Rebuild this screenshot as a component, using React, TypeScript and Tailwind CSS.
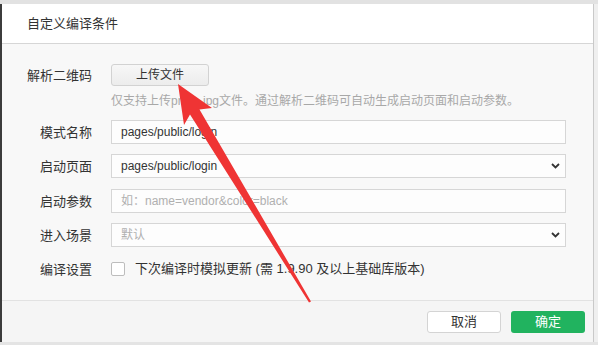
import React from 'react';

// Custom compile-condition dialog (WeChat devtools style) with a red annotation arrow

const font = { fontFamily: '"Liberation Sans", "Noto Sans CJK SC", sans-serif' };

function Chevron() {
  return (
    <svg width="9" height="6" viewBox="0 0 9 6" className="shrink-0">
      <polyline points="1,1 4.5,4.5 8,1" fill="none" stroke="#333" strokeWidth="1.8" />
    </svg>
  );
}

function Row({ label, children, className = '' }: { label: string; children: React.ReactNode; className?: string }) {
  return (
    <div className={`flex items-center gap-[19px] ${className}`}>
      <div className="w-[66px] whitespace-nowrap text-right text-[13px] text-[#333] leading-none">{label}</div>
      {children}
    </div>
  );
}

function Field({ value, placeholder, select }: { value?: string; placeholder?: string; select?: boolean }) {
  return (
    <div className="flex h-[24px] w-[455px] items-center justify-between border border-[#d6d6d6] bg-[#fdfdfd] pl-[9px] pr-[5px]">
      {value ? (
        <span className="text-[12px] text-[#333]">{value}</span>
      ) : (
        <span className="text-[12px] text-[#b0b0b0]">{placeholder}</span>
      )}
      {select && <Chevron />}
    </div>
  );
}

export default function App() {
  return (
    <div className="relative h-[345px] w-[598px] overflow-hidden bg-[#e4e4e4]" style={font}>
      <div className="h-[4px] bg-[#e2e2e2]" />
      <div className="flex h-[338px]">
        <div className="w-[2px] bg-[#3c3c3c]" />
        <div className="flex w-[592px] flex-col border-r border-[#c9c9c9]">
          {/* header */}
          <div className="flex h-[40px] items-center border-b border-[#d6d6d6] bg-white pl-[25px] text-[13px] text-[#333]">
            自定义编译条件
          </div>

          {/* body */}
          <div className="h-[256px] bg-[#f8f8f8] pl-[24px] pt-[20px]">
            <Row label="解析二维码">
              <button className="h-[22px] w-[98px] rounded-[3px] border border-[#d2d2d2] bg-gradient-to-b from-[#f7f7f7] to-[#ececec] text-[12px] text-[#333]">
                上传文件
              </button>
            </Row>
            <div className="ml-[85px] mt-[7px] text-[12px] leading-[16px] text-[#a8a8a8]">
              仅支持上传png、jpg文件。通过解析二维码可自动生成启动页面和启动参数。
            </div>
            <Row label="模式名称" className="mt-[11px]">
              <Field value="pages/public/login" />
            </Row>
            <Row label="启动页面" className="mt-[10px]">
              <Field value="pages/public/login" select />
            </Row>
            <Row label="启动参数" className="mt-[11px]">
              <Field placeholder="如：name=vendor&color=black" />
            </Row>
            <Row label="进入场景" className="mt-[10px]">
              <Field placeholder="默认" select />
            </Row>
            <Row label="编译设置" className="mt-[10px] h-[24px]">
              <div className="flex items-center gap-[10px]">
                <div className="h-[14px] w-[14px] rounded-[2px] border border-[#bdbdbd] bg-white" />
                <span className="text-[13px] text-[#333]">下次编译时模拟更新 (需 1.9.90 及以上基础库版本)</span>
              </div>
            </Row>
          </div>

          {/* footer */}
          <div className="flex h-[42px] items-center justify-end gap-[10px] border-t border-[#e2e2e2] bg-[#f5f5f5] pr-[8px]">
            <button className="h-[22px] w-[74px] rounded-[3px] border border-[#d4d4d4] bg-white text-[13px] text-[#333]">
              取消
            </button>
            <button className="h-[22px] w-[74px] rounded-[3px] bg-[#21b35f] text-[13px] text-white">
              确定
            </button>
          </div>
        </div>
        <div className="flex-1 bg-[#efefef]" />
      </div>

      {/* annotation arrow */}
      <svg className="pointer-events-none absolute left-0 top-0" width="598" height="345">
        <polygon
          points="178,84 212,108 199.5,109.5 311,301.5 309,302.5 190,114.5 184,125"
          fill="#ef3434"
        />
      </svg>
    </div>
  );
}
